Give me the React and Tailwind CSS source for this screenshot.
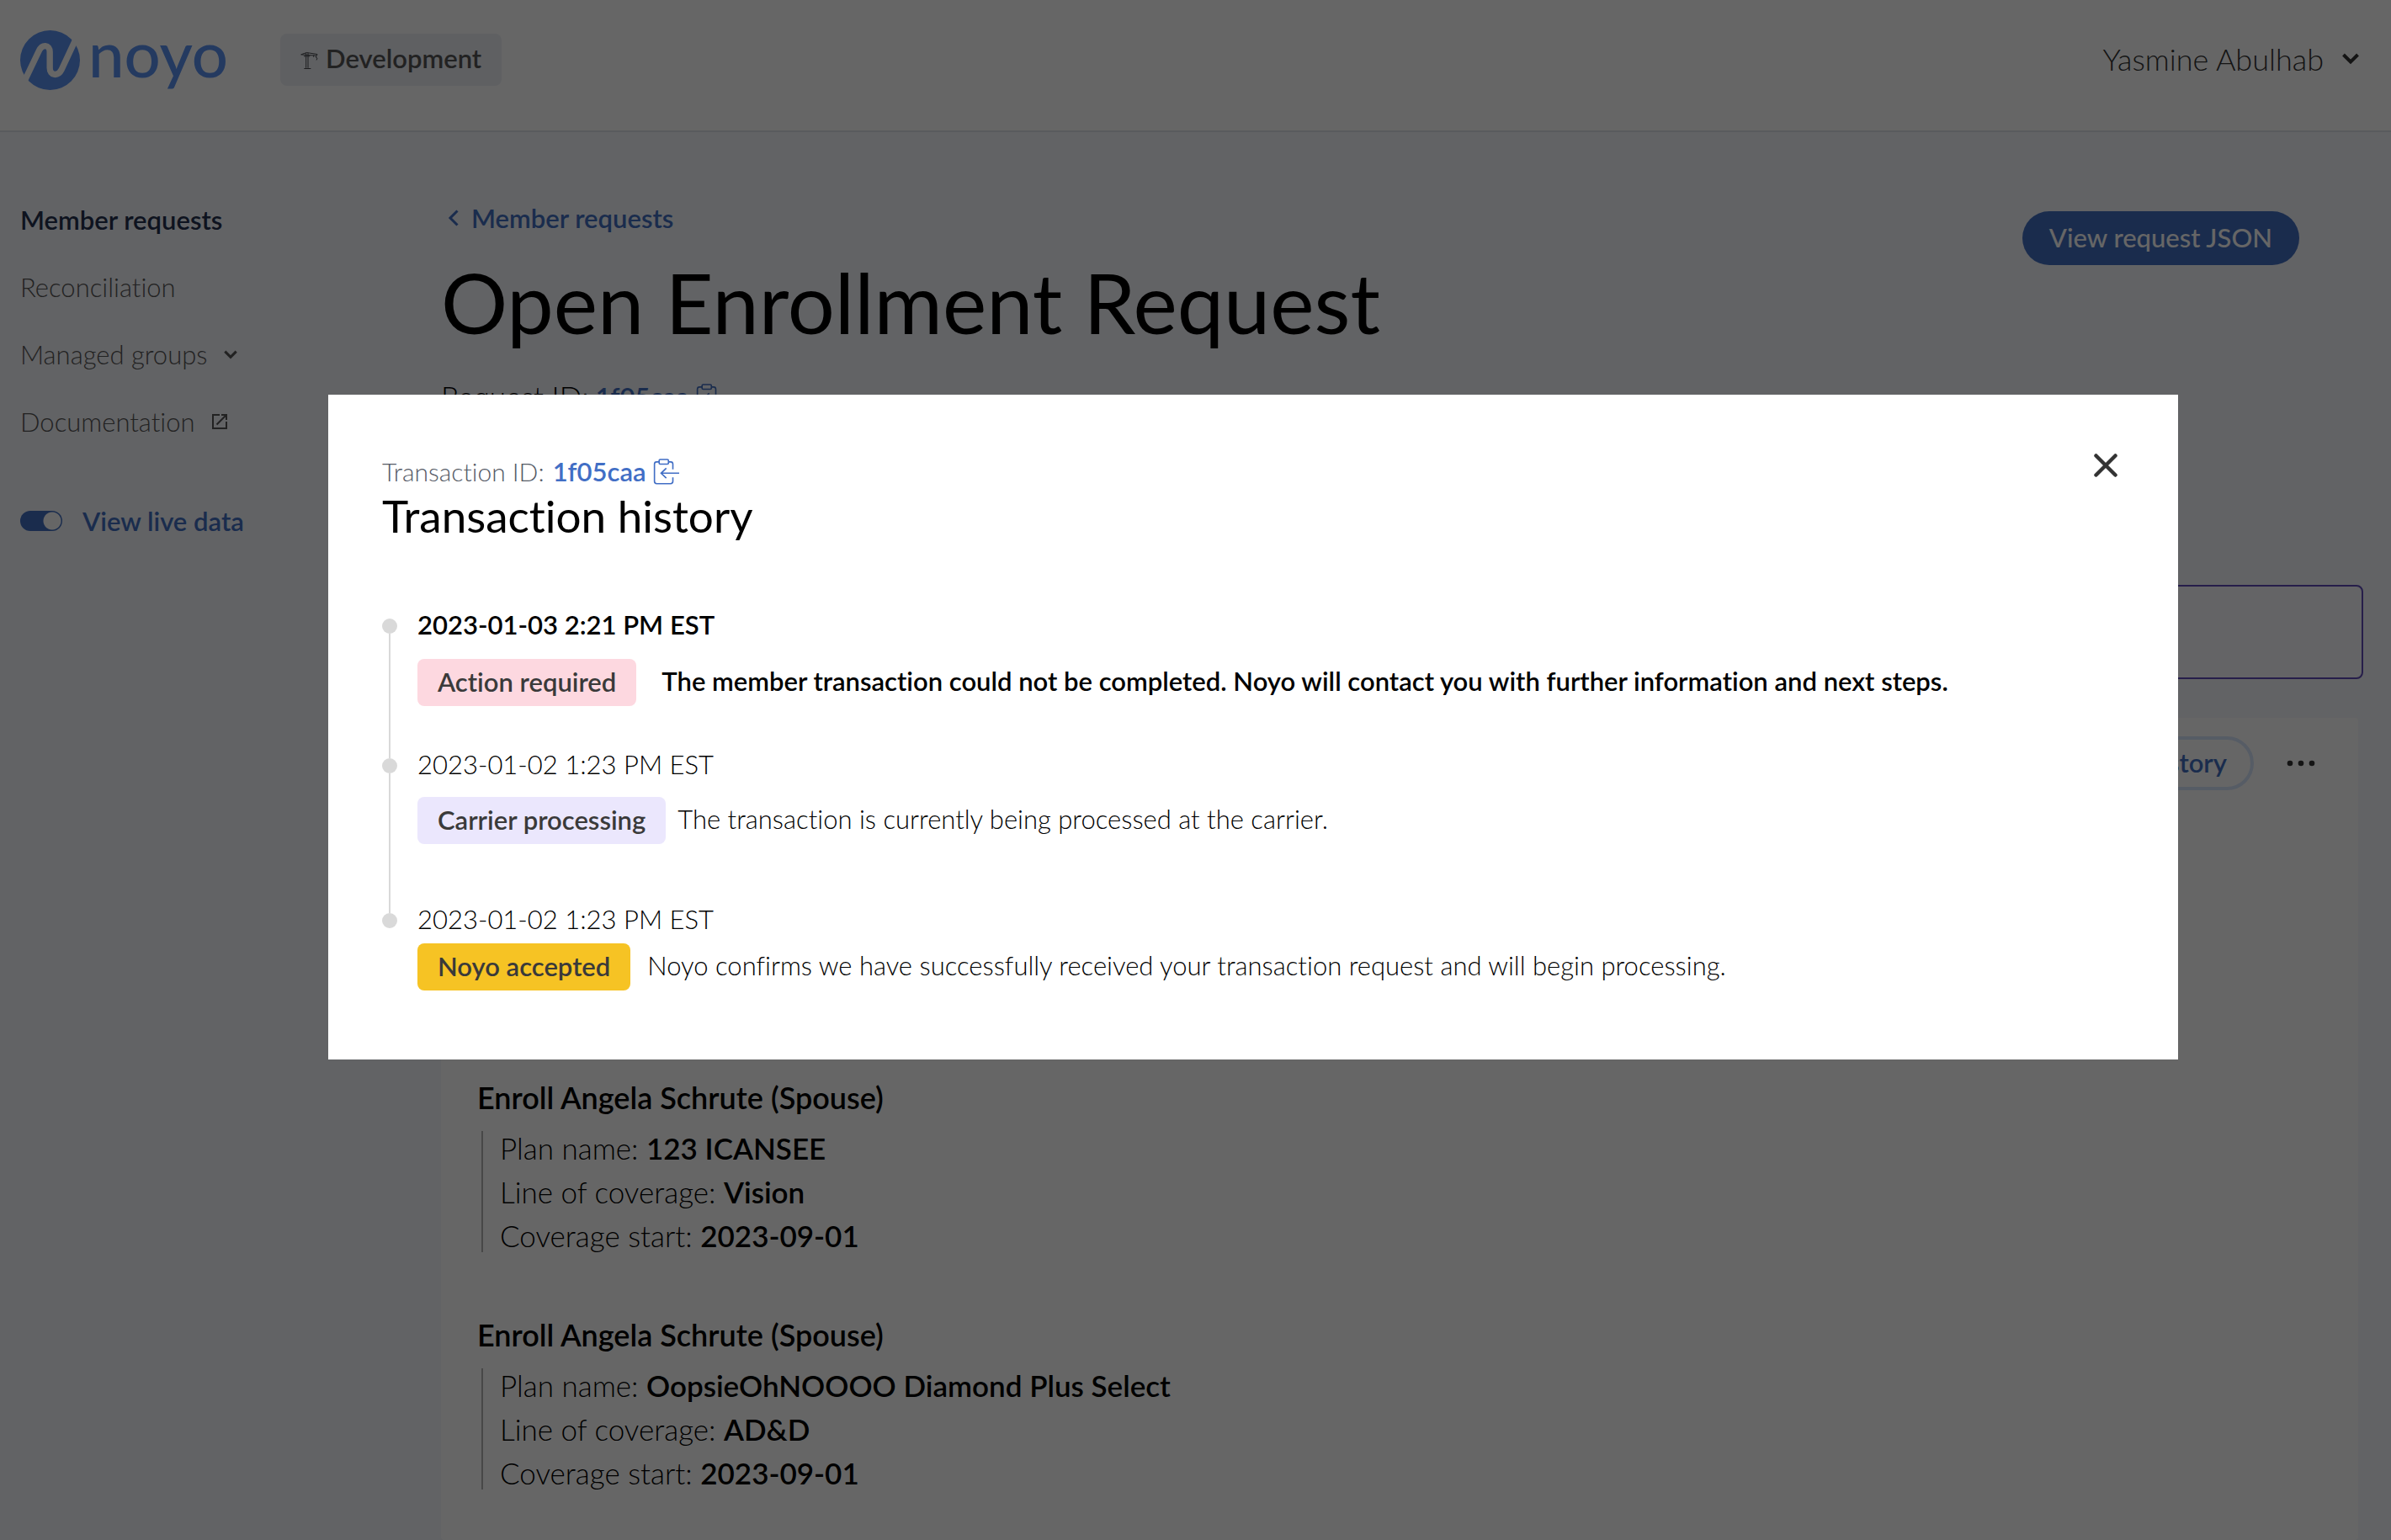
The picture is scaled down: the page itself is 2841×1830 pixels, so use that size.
const navItems = [
  { label: 'Member requests', active: true },
  { label: 'Reconciliation' },
  { label: 'Managed groups', icon: 'chevron' },
  { label: 'Documentation', icon: 'external' },
]

const enrollments = [
  {
    id: 1,
    title: 'Enroll Angela Schrute (Spouse)',
    plan: '123 ICANSEE',
    coverage: 'Vision',
    start: '2023-09-01',
  },
  {
    id: 2,
    title: 'Enroll Angela Schrute (Spouse)',
    plan: 'OopsieOhNOOOO Diamond Plus Select',
    coverage: 'AD&D',
    start: '2023-09-01',
  },
]

const history = [
  {
    id: 1,
    date: '2023-01-03 2:21 PM EST',
    status: 'Action required',
    message:
      'The member transaction could not be completed. Noyo will contact you with further information and next steps.',
    badge: 'bg-[#fdd8e0]',
    text: 'font-semibold',
    row: 'mt-[22px] gap-[30px] pb-[50px]',
  },
  {
    id: 2,
    date: '2023-01-02 1:23 PM EST',
    status: 'Carrier processing',
    message: 'The transaction is currently being processed at the carrier.',
    badge: 'bg-[#ebe7fd]',
    text: 'font-light',
    row: 'mt-5 gap-[14px] pb-[70px]',
  },
  {
    id: 3,
    date: '2023-01-02 1:23 PM EST',
    status: 'Noyo accepted',
    message:
      'Noyo confirms we have successfully received your transaction request and will begin processing.',
    badge: 'bg-[#f6c324]',
    text: 'font-light',
    row: 'mt-[10px] gap-5',
  },
]

function LogoMark() {
  return (
    <svg viewBox="42 31 212 212" className="h-[71px] w-[71px]" aria-hidden="true">
      <circle cx="148" cy="137" r="106" fill="#5a91f0" />
      <path
        d="M52 222 L108 105 C119 80 147 80 147 108 V164 C147 194 177 194 188 172 L244 52"
        fill="none"
        stroke="#fff"
        strokeWidth="22"
      />
    </svg>
  )
}

function Crane() {
  return (
    <svg
      viewBox="100 72 66 68"
      className="h-[23px] w-[22px]"
      fill="none"
      stroke="#4b4d52"
      strokeWidth="3"
      aria-hidden="true"
    >
      <path d="M120 80V134M127 80V134M113 136H137" />
      <path d="M102 86L122 79L160 85L158 90L102 86" />
      <path d="M112 92L134 92M147 88V95M156 90V97L160 99L157 106" />
    </svg>
  )
}

function Chevron({ className }) {
  return (
    <svg viewBox="0 0 20 14" className={className} fill="none" stroke="currentColor" strokeWidth="4" aria-hidden="true">
      <path d="M1.500 2L10 10.500L18.500 2" />
    </svg>
  )
}

function ExternalIcon() {
  return (
    <svg viewBox="0 0 18 18" className="h-[18px] w-[18px]" fill="none" stroke="currentColor" strokeWidth="2" aria-hidden="true">
      <path d="M9 1H1V17H17V9" />
      <path d="M11 1H17V7M17 1L5.500 12.500" />
    </svg>
  )
}

function ClipboardIcon() {
  return (
    <svg
      viewBox="405 28 98 98"
      className="h-8 w-8"
      fill="none"
      stroke="currentColor"
      strokeWidth="5"
      aria-hidden="true"
    >
      <path d="M427 43H418Q410 43 410 51V114Q410 122 418 122H469Q477 122 477 114V99M477 70V51Q477 43 469 43H461" />
      <rect x="427" y="34" width="34" height="17" rx="4" />
      <path d="M500 84H434M453 66L434 84L453 102" />
    </svg>
  )
}

function Header() {
  return (
    <header className="flex h-[157px] items-start justify-between border-b-2 border-[#dfe3ea] bg-white pl-6 pr-[38px]">
      <div className="flex items-center">
        <a href="#home" className="flex h-[142px] items-center gap-[10px] text-[#5a91f0]">
          <LogoMark />
          <span className="pb-4 text-[76px] font-medium leading-[80px]">noyo</span>
        </a>
        <div className="ml-[62px] flex h-[62px] items-center gap-2 rounded-lg bg-[#eef0f5] px-6 text-[31px] font-semibold text-[#555]">
          <Crane />
          <span className="pb-1">Development</span>
        </div>
      </div>
      <button type="button" className="flex h-[140px] items-center gap-[22px] text-[36px] font-light text-[#333]">
        Yasmine Abulhab
        <Chevron className="h-[14px] w-5" />
      </button>
    </header>
  )
}

function Sidebar() {
  return (
    <aside className="w-[524px] shrink-0 pl-6 pt-16">
      <nav>
        {navItems.map((item) => (
          <a
            key={item.label}
            href="#nav"
            className={
              item.active
                ? 'flex h-20 items-center text-[31px] font-semibold text-[#23304f]'
                : 'flex h-20 items-center gap-5 text-[31px] font-light text-[#555]'
            }
          >
            {item.label}
            {item.icon === 'chevron' && <Chevron className="h-[11px] w-4" />}
            {item.icon === 'external' && <ExternalIcon />}
          </a>
        ))}
      </nav>
      <label className="mt-[54px] flex h-12 items-center gap-6 text-[31px] font-semibold text-[#416ec1]">
        <input
          type="checkbox"
          role="switch"
          defaultChecked
          className="h-6 w-[50px] appearance-none rounded-full bg-[#416ec1] bg-[radial-gradient(circle_at_38px_12px,white_10px,transparent_11px)]"
        />
        View live data
      </label>
    </aside>
  )
}

function Enrollment({ item }) {
  return (
    <section>
      <h2 className="text-[36px] font-semibold leading-[48px]">{item.title}</h2>
      <div className="ml-[5px] mt-4 flex flex-col gap-3 border-l-2 border-[#b4b4b4] pl-5 text-[35px] font-light leading-[40px]">
        <p>
          Plan name: <span className="font-semibold">{item.plan}</span>
        </p>
        <p>
          Line of coverage: <span className="font-semibold">{item.coverage}</span>
        </p>
        <p>
          Coverage start: <span className="font-semibold">{item.start}</span>
        </p>
      </div>
    </section>
  )
}

function RequestPage() {
  return (
    <main className="flex grow flex-col pr-[33px] pt-[84px]">
      <div className="flex items-start justify-between pr-[76px]">
        <div>
          <a href="#requests" className="flex items-center gap-3 pl-2 text-[31px] font-semibold leading-[36px] text-[#416ec1]">
            <svg viewBox="0 0 16 20" className="h-5 w-4" fill="none" stroke="currentColor" strokeWidth="3" aria-hidden="true">
              <path d="M11.500 1.500L3 10L11.500 18.500" />
            </svg>
            Member requests
          </a>
          <h1 className="mt-[26px] text-[99px] leading-[112px]">Open Enrollment Request</h1>
          <div className="mt-9 flex h-10 items-center gap-2">
            <span className="text-[35px] font-light">Request ID:</span>
            <a href="#request" className="flex items-center gap-2 text-[31px] font-semibold text-[#416ec1]">
              1f05caa
              <ClipboardIcon />
            </a>
          </div>
        </div>
        <button type="button" className="mt-[10px] h-16 rounded-full bg-[#416ec1] px-8 pb-0.5 text-[31px] font-medium text-white">
          View request JSON
        </button>
      </div>

      <div className="mt-[204px] h-28 rounded-lg border-2 border-[#5f4bb9] bg-[#fafaff]" />

      <div className="mr-[6px] mt-[46px] grow rounded bg-white pb-[60px] pl-[43px] pt-[22px]">
        <div className="flex items-center justify-end gap-[39px] pr-[51px]">
          <button type="button" className="h-16 rounded-full border-4 border-[#d7e6fc] px-7 pb-0.5 text-[31px] font-semibold text-[#416ec1]">
            Transaction history
          </button>
          <button type="button" aria-label="More actions">
            <svg viewBox="0 0 34 8" className="h-2 w-[34px]" fill="#333" aria-hidden="true">
              <circle cx="4" cy="4" r="3.300" />
              <circle cx="17" cy="4" r="3.300" />
              <circle cx="30" cy="4" r="3.300" />
            </svg>
          </button>
        </div>
        <div className="mt-[341px] flex flex-col gap-[74px]">
          {enrollments.map((item) => (
            <Enrollment key={item.id} item={item} />
          ))}
        </div>
      </div>
    </main>
  )
}

function HistoryItem({ item, first, last }) {
  return (
    <li className="flex gap-6">
      <div className="flex w-[18px] flex-col items-center">
        <span className={first ? 'h-3 w-[2px]' : 'h-3 w-[2px] bg-[#d9d9d9]'} />
        <span className="h-[18px] w-[18px] rounded-full bg-[#d9d9d9]" />
        {!last && <span className="w-[2px] grow bg-[#d9d9d9]" />}
      </div>
      <div className={`text-[31px] ${item.text}`}>
        <p className="leading-[38px]">{item.date}</p>
        <div className={`flex items-center ${item.row}`}>
          <span
            className={`flex h-14 items-center rounded-lg px-6 pb-0.5 font-semibold text-[#3a3a3a] ${item.badge}`}
          >
            {item.status}
          </span>
          <p className="pb-1">{item.message}</p>
        </div>
      </div>
    </li>
  )
}

function HistoryModal() {
  return (
    <div className="fixed inset-0 flex items-start bg-black/60 pl-[390px] pr-[253px] pt-[469px]">
      <div role="dialog" aria-labelledby="history-title" className="grow bg-white pb-[82px] pl-16 pr-[72px] pt-[70px]">
        <div className="flex items-start justify-between">
          <div>
            <div className="flex items-center gap-[10px] leading-[42px]">
              <span className="text-[30px] font-light text-[#555a66]">Transaction ID:</span>
              <a href="#transaction" className="flex items-center gap-2 text-[31px] font-semibold text-[#416ec5]">
                1f05caa
                <ClipboardIcon />
              </a>
            </div>
            <h2 id="history-title" className="text-[53px] leading-[64px]">
              Transaction history
            </h2>
          </div>
          <button type="button" aria-label="Close">
            <svg viewBox="0 0 28 28" className="h-7 w-7" fill="none" stroke="#333" strokeWidth="4.500" strokeLinecap="round" aria-hidden="true">
              <path d="M2.500 2.500L25.500 25.500M25.500 2.500L2.500 25.500" />
            </svg>
          </button>
        </div>
        <ol className="mt-[78px]">
          {history.map((item, i) => (
            <HistoryItem key={item.id} item={item} first={i === 0} last={i === history.length - 1} />
          ))}
        </ol>
      </div>
    </div>
  )
}

export default function App() {
  return (
    <div className="flex min-h-screen flex-col bg-[#f5f7fc] font-['Lato','Open_Sans',sans-serif] text-black [font-variant-ligatures:no-common-ligatures]">
      <Header />
      <div className="flex grow">
        <Sidebar />
        <RequestPage />
      </div>
      <HistoryModal />
    </div>
  )
}
